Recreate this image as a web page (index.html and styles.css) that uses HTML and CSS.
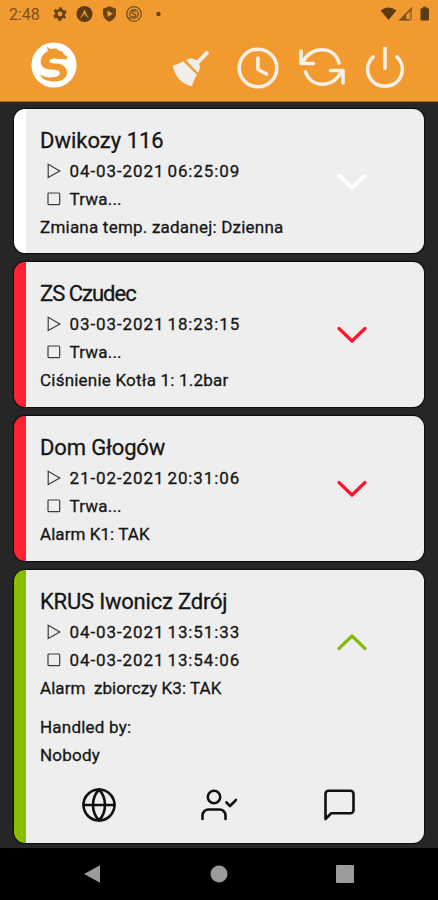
FILE: index.html
```
<!DOCTYPE html>
<html lang="pl">
<head>
    <meta charset="UTF-8">
    <meta name="viewport" content="width=device-width, initial-scale=1.0">
    <title>Alarmy</title>
    <link rel="stylesheet" href="styles.css">
</head>
<body>
    <div class="screen">
        <!-- Header -->
        <header class="header">
            <div class="status-bar">
                <span class="clock">2:48</span>
                <svg class="status-icons" width="110" height="18" viewBox="0 0 110 18">
                    <g fill="none" stroke="#6a4315">
                        <circle cx="9" cy="9" r="3.800" stroke-width="2.800"/>
                        <circle cx="9" cy="9" r="5.700" stroke-width="2.200" stroke-dasharray="3 2.970" stroke-dashoffset="1.500" transform="rotate(30 9 9)"/>
                    </g>
                    <circle cx="33.500" cy="9" r="8" fill="#5c3a12"/>
                    <path d="M29.500 13Q31.500 10 33.500 5Q35.500 10 37.500 13Q35.500 11.500 33.500 8.500Q31.500 11.500 29.500 13z" fill="#f09a30" stroke="#f09a30" stroke-width=".5"/>
                    <path d="M58.500 1.300l6.500 2.500v4.700c0 3.600-2.500 6.500-6.500 8.300-4-1.800-6.500-4.700-6.500-8.300V3.800z" fill="#6a4315"/>
                    <path d="M56.500 5.500l5.500 3.200-5.500 3.300z" fill="#f09a30"/>
                    <g fill="none" stroke="#79501f" stroke-width="1.300">
                        <circle cx="83" cy="9" r="7.300"/>
                        <circle cx="83" cy="9" r="4.300"/>
                        <path d="M85 6.500c-2-1.500-5 0-3.600 1.800 1 1 4 .7 3.600 2.500-.5 1.500-3 1.400-4.300.2M76 12l4 2"/>
                    </g>
                    <circle cx="107.500" cy="9" r="2.200" fill="#6a4315"/>
                </svg>
                <svg class="signal" width="50" height="16" viewBox="0 0 50 16">
                    <path d="M.5 4.500Q8.500-1.500 16.500 4.500L8.500 14z" fill="#5c3a12"/>
                    <path d="M18.500 14.500L32 1v13.500z" fill="#b17326"/>
                    <path d="M18.500 14.500L32 1v3.500h-1.500L26 9v4h3v1.500z" fill="#7d511d"/>
                    <path d="M26.500 8.500L29.500 6v7h-3z" fill="#f09a30"/>
                    <path d="M40.500 3.500q0-1.200 1.200-1.200h1.300V.8h3.500v1.500h1.300q1.200 0 1.200 1.200v10q0 1-1.200 1h-6.100q-1.200 0-1.200-1z" fill="#5c3a12"/>
                </svg>
            </div>
            <div class="toolbar">
                <svg class="logo" width="46" height="46" viewBox="0 0 46 46">
                    <circle cx="23" cy="23" r="22.600" fill="#fff"/>
                    <path d="M16 4.800L19.500 7 25.500 6.500 27.500 8.200 31.500 9.800 33 12.500 36.500 14.800 35.500 17.500 30.500 16.700 26.500 17C22.500 15.800 18.500 17 18.500 19.200 18.500 21.300 21.500 21.300 25.500 21.600 32 22 36 25.500 36 30.500 36 36.500 30.500 39.500 23.500 39.500 16.500 39.500 11 37.500 9 32.500 13 35 17.500 35.800 21.700 35.300 26 35 29 33.500 28.800 30.800 28.600 28.200 25 27.800 20 27.600 13.500 27.300 9.700 24.800 9.700 19.800 9.700 15 12.500 11.500 16.800 9z" fill="#f09a30"/>
                </svg>
                <svg class="broom" width="38" height="38" viewBox="0 0 38 38">
                    <path d="M36 2.800L25.500 13.500" stroke="#f1eeea" stroke-width="4"/>
                    <path d="M14 11.200C18 8.500 22.500 9 25.500 12.200 28.500 15.500 28.500 19.500 26 23.800z" fill="#f1eeea"/>
                    <path d="M.8 16.500C4.500 15.800 8 14.500 11 12.300L25 25.700C22.800 29 21 33 20 37.300 10 35 3 28.500.8 16.500z" fill="#f1eeea"/>
                </svg>
                <svg class="tool-icon" width="42" height="42" viewBox="0 0 42 42">
                    <circle cx="21" cy="21" r="18.800"/>
                    <path d="M21 11v11.500l8.500 4.500"/>
                </svg>
                <svg class="tool-icon" width="46" height="42" viewBox="0 0 46 42">
                    <path d="M2 4v12.500H14.500M44 36V23.500H31.500"/>
                    <path d="M3.500 15.500C8 7 15 2.800 23 2.800c8.500 0 14.800 5 17 13.200M42.500 24.500C38 33 31 37.200 23.500 37.200 15.500 37.200 9 32.500 6.500 25"/>
                </svg>
                <svg class="tool-icon" width="42" height="42" viewBox="0 0 42 42">
                    <path d="M20 0.800v20.500M8 10C-3 21 4 39.200 20 39.200S43 21 32 10"/>
                </svg>
            </div>
        </header>

        <!-- Alarm cards -->
        <main class="list">
            <section class="card white">
                <div class="info">
                    <h2 class="dwikozy">Dwikozy 116</h2>
                    <div class="row time"><svg class="mark" viewBox="0 0 14 16"><path d="M1.200 1.200v13.300L12.800 7.900z"/></svg><span>04-03-2021 06:25:09</span></div>
                    <div class="row"><svg class="mark" viewBox="0 0 14 16"><rect x="1" y="2" width="11.700" height="11.700" rx="1"/></svg><span>Trwa...</span></div>
                    <p>Zmiana temp. zadanej: Dzienna</p>
                </div>
                <svg class="chevron" width="32" height="20" viewBox="0 0 32 20"><path d="M3 3.500l13 12.500L29 3.500"/></svg>
            </section>

            <section class="card red">
                <div class="info">
                    <h2 class="czudec">ZS Czudec</h2>
                    <div class="row time"><svg class="mark" viewBox="0 0 14 16"><path d="M1.200 1.200v13.300L12.800 7.900z"/></svg><span>03-03-2021 18:23:15</span></div>
                    <div class="row"><svg class="mark" viewBox="0 0 14 16"><rect x="1" y="2" width="11.700" height="11.700" rx="1"/></svg><span>Trwa...</span></div>
                    <p>Ciśnienie Kotła 1: 1.2bar</p>
                </div>
                <svg class="chevron" width="32" height="20" viewBox="0 0 32 20"><path d="M3 3.500l13 12.500L29 3.500"/></svg>
            </section>

            <section class="card red">
                <div class="info">
                    <h2 class="glogow">Dom Głogów</h2>
                    <div class="row time"><svg class="mark" viewBox="0 0 14 16"><path d="M1.200 1.200v13.300L12.800 7.900z"/></svg><span>21-02-2021 20:31:06</span></div>
                    <div class="row"><svg class="mark" viewBox="0 0 14 16"><rect x="1" y="2" width="11.700" height="11.700" rx="1"/></svg><span>Trwa...</span></div>
                    <p class="alarm">Alarm K1: TAK</p>
                </div>
                <svg class="chevron" width="32" height="20" viewBox="0 0 32 20"><path d="M3 3.500l13 12.500L29 3.500"/></svg>
            </section>

            <section class="card green open">
                <div class="info">
                    <h2 class="krus">KRUS Iwonicz Zdrój</h2>
                    <div class="row time"><svg class="mark" viewBox="0 0 14 16"><path d="M1.200 1.200v13.300L12.800 7.900z"/></svg><span>04-03-2021 13:51:33</span></div>
                    <div class="row time"><svg class="mark" viewBox="0 0 14 16"><rect x="1" y="2" width="11.700" height="11.700" rx="1"/></svg><span>04-03-2021 13:54:06</span></div>
                    <p class="alarm">Alarm&nbsp; zbiorczy K3: TAK</p>
                    <div class="handled">
                        <p>Handled by:</p>
                        <p>Nobody</p>
                    </div>
                    <div class="actions">
                        <svg width="36" height="36" viewBox="0 0 36 36"><circle cx="18" cy="18" r="15.500"/><path d="M2.500 18h31M18 2.500c8 8.500 8 22.500 0 31M18 2.500c-8 8.500-8 22.500 0 31"/></svg>
                        <svg width="36" height="36" viewBox="0 0 36 36"><circle cx="13" cy="10" r="6.200"/><path d="M1.500 32v-3.500a6 6 0 0 1 6-6h11a6 6 0 0 1 6 6V32M25.500 15.500l3.500 3.500 6-6"/></svg>
                        <svg width="36" height="36" viewBox="0 0 36 36"><path d="M32.500 23.200a3 3 0 0 1-3 3H10.300L4.500 32V6.800a3 3 0 0 1 3-3h22a3 3 0 0 1 3 3z"/></svg>
                    </div>
                </div>
                <svg class="chevron" width="32" height="20" viewBox="0 0 32 20"><path d="M3 15.500L16 3l13 12.500"/></svg>
            </section>
        </main>

        <!-- System navigation -->
        <nav class="nav-bar">
            <svg width="18" height="20" viewBox="0 0 18 20"><path d="M0 10L16 1.200v17.600z"/></svg>
            <svg width="18" height="18" viewBox="0 0 18 18"><circle cx="9" cy="9" r="8.500"/></svg>
            <svg width="18" height="18" viewBox="0 0 18 18"><rect width="18" height="18" rx="1"/></svg>
        </nav>
    </div>
</body>
</html>
```
FILE: styles.css
```
* {
    margin: 0;
    padding: 0;
    box-sizing: border-box;
}

body {
    font-family: Roboto, 'Noto Sans', sans-serif;
    background: #262626;
    color: #161616;
}

svg {
    display: block;
    flex-shrink: 0;
}

.screen {
    width: 438px;
    height: 900px;
    display: flex;
    flex-direction: column;
    overflow: hidden;
}

/* Header */
.header {
    height: 102px;
    background: #f09a30;
    border-bottom: 1px solid #a56c25;
}

.status-bar {
    display: flex;
    align-items: center;
    height: 28px;
    padding: 0 8px 0 9px;
}

.clock {
    width: 42px;
    font-size: 16px;
    color: #7d511d;
}

.signal {
    margin-left: auto;
}

.toolbar {
    display: flex;
    align-items: center;
    height: 76px;
    padding: 0 33px 0 31px;
}

.logo {
    margin-top: -2px;
}

.broom {
    margin: 3px 0 0 95px;
}

.tool-icon {
    margin-top: 4px;
    margin-left: 27px;
    fill: none;
    stroke: #f6f0e9;
    stroke-width: 3.6;
    stroke-linecap: round;
    stroke-linejoin: round;
}

.tool-icon + .tool-icon {
    margin-left: 20px;
}

/* Cards */
.list {
    flex: 1;
    display: flex;
    flex-direction: column;
    gap: 9px;
    padding: 6.700px 14px 0;
}

.card {
    display: flex;
    justify-content: space-between;
    height: 144.700px;
    padding: 17px 56px 0 14px;
    background: #eee;
    border-left: 12px solid #fff;
    border-radius: 11px;
    box-shadow: 0 0 1px 1px #0c0c0c;
}

.white {
    color: #fff;
}

.red {
    border-color: #ff2233;
    color: #ff1430;
}

.green {
    border-color: #8abd00;
    color: #85ba0b;
}

.open {
    height: 273.500px;
}

.info {
    color: #161616;
    font-size: 17px;
    line-height: 28px;
    letter-spacing: 0.22px;
    white-space: nowrap;
    -webkit-text-stroke: 0.3px #161616;
}

.info h2 {
    height: 31px;
    font-size: 22px;
    font-weight: 400;
    line-height: 30px;
}

.info .dwikozy {
    letter-spacing: 0;
}

.info .czudec {
    letter-spacing: -1px;
}

.info .glogow {
    letter-spacing: -0.150px;
}

.info .krus {
    letter-spacing: -0.200px;
}

.row {
    display: flex;
    align-items: center;
    padding-left: 7px;
}

.row span {
    letter-spacing: 0.200px;
}

.time span {
    letter-spacing: 0.900px;
    word-spacing: -2px;
}

.info .alarm {
    letter-spacing: 0.060px;
}

.mark {
    width: 14px;
    height: 16px;
    margin-right: 8.500px;
    fill: none;
    stroke: #3c3c3c;
    stroke-width: 1.200;
}

.chevron {
    margin-top: 46px;
    fill: none;
    stroke: currentColor;
    stroke-width: 3.2;
    stroke-linecap: round;
    stroke-linejoin: round;
}

.card .chevron {
    margin-left: -100px;
}

.handled {
    margin-top: 11.500px;
}

.actions {
    display: flex;
    gap: 84px;
    padding: 18px 0 0 41.300px;
}

.actions svg {
    fill: none;
    stroke: #111;
    stroke-width: 2.600;
    stroke-linecap: round;
    stroke-linejoin: round;
}

/* Bottom bar */
.nav-bar {
    display: flex;
    align-items: center;
    justify-content: space-between;
    height: 52px;
    padding: 0 84px;
    background: #000;
    fill: #9b9b9b;
}
```
